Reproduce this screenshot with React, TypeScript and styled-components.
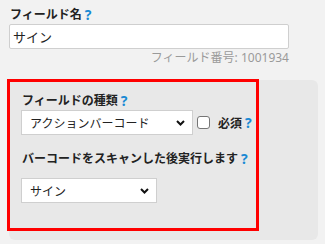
import React from "react";
import styled, { createGlobalStyle } from "styled-components";

const Global = createGlobalStyle`
  html, body { margin: 0; padding: 0; background: #f2f2f2; }
  body { font-family: "Noto Sans", "Noto Sans CJK JP", sans-serif; color: #222; }
  * { box-sizing: border-box; }
`;

const Page = styled.div`
  position: relative;
  width: 325px;
  height: 244px;
  padding: 7px 7px 0 9px;
`;

const Label = styled.div`
  display: flex;
  align-items: center;
  gap: 3px;
  padding-left: 1px;
  font-size: 12px;
  font-weight: 700;
  line-height: 16px;
  color: #222;
`;

const Help = styled.span`
  color: #1a8ad4;
  font-weight: 700;
  font-size: 14px;
  line-height: 16px;
`;

const TextInput = styled.div`
  margin-top: 1px;
  width: 280px;
  height: 25px;
  background: #fff;
  border: 1px solid #cfcfcf;
  border-radius: 2px;
  padding: 0 3px;
  display: flex;
  align-items: center;
  font-size: 13px;
  color: #222;
`;

const FieldNo = styled.div`
  width: 280px;
  text-align: right;
  font-size: 12px;
  color: #9a9a9a;
  line-height: 16px;
  margin-top: 1px;
`;

const Panel = styled.div`
  margin-top: 14px;
  width: 309px;
  height: 160px;
  background: #e8e8e8;
  border-radius: 6px;
  padding: 13px 12px 0 12px;
`;

const Row = styled.div`
  display: flex;
  align-items: center;
  gap: 4px;
  margin-top: 1px;
`;

const SelectBox = styled.div<{ $w: number }>`
  position: relative;
  width: ${(p) => p.$w}px;
  height: 25px;
  background: #fff;
  border: 1px solid #cfcfcf;
  display: flex;
  align-items: center;
  padding-left: 8px;
  font-size: 12px;
  color: #222;
`;

const Chevron = styled.svg`
  position: absolute;
  right: 7px;
  top: 9px;
`;

const Check = styled.span`
  width: 13px;
  height: 13px;
  border: 1px solid #767676;
  border-radius: 3px;
  background: #fff;
  margin-right: 4px;
`;

const Req = styled.span`
  font-size: 12px;
  font-weight: 700;
  display: flex;
  align-items: center;
  gap: 3px;
`;

const Label2 = styled(Label)`
  margin-top: 16px;
  margin-bottom: 11px;
`;

const Highlight = styled.div`
  position: absolute;
  left: 7px;
  top: 79px;
  width: 252px;
  height: 152px;
  border: 3px solid #ff0000;
  pointer-events: none;
`;

const Arrow = () => (
  <Chevron width="9" height="6" viewBox="0 0 9 6">
    <path d="M1 1 L4.5 4.5 L8 1" fill="none" stroke="#111" strokeWidth="2" />
  </Chevron>
);

export default function App() {
  return (
    <>
      <Global />
      <Page>
        <Label>
          フィールド名<Help>?</Help>
        </Label>
        <TextInput>サイン</TextInput>
        <FieldNo>フィールド番号: 1001934</FieldNo>
        <Panel>
          <Label>
            フィールドの種類<Help>?</Help>
          </Label>
          <Row>
            <SelectBox $w={172}>
              アクションバーコード
              <Arrow />
            </SelectBox>
            <Check />
            <Req>
              必須<Help>?</Help>
            </Req>
          </Row>
          <Label2>
            バーコードをスキャンした後実行します<Help>?</Help>
          </Label2>
          <SelectBox $w={136}>
            サイン
            <Arrow />
          </SelectBox>
        </Panel>
        <Highlight />
      </Page>
    </>
  );
}
